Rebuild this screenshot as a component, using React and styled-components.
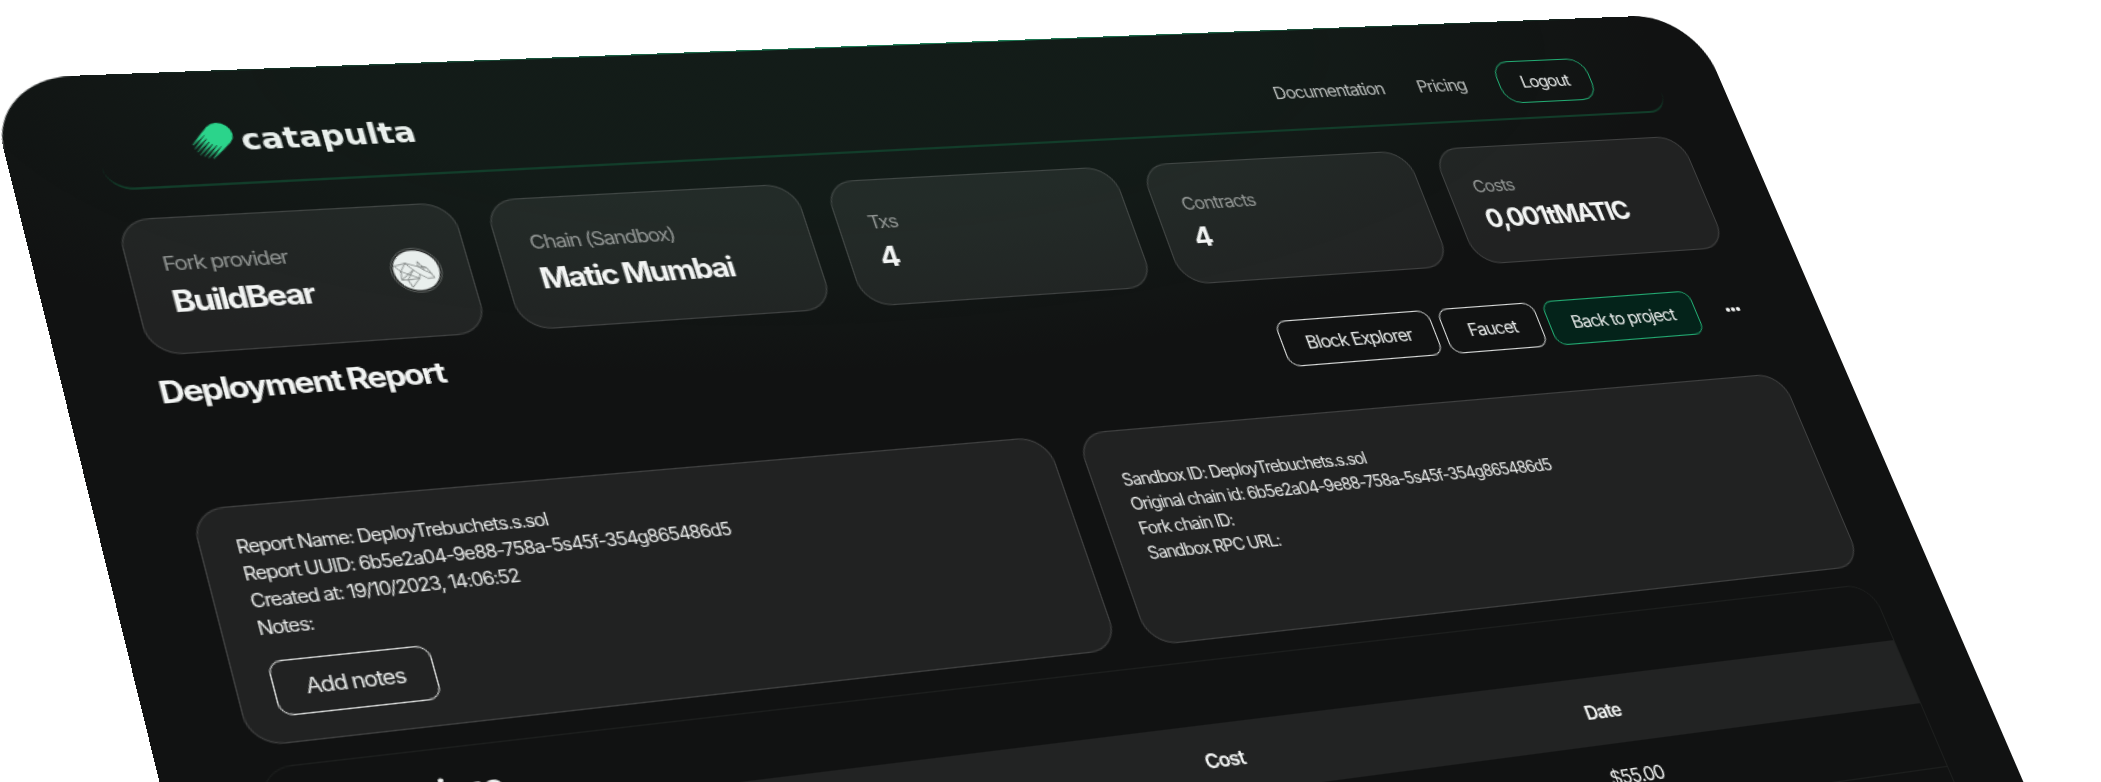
import React from 'react';
import styled, { createGlobalStyle, css } from 'styled-components';

const GlobalStyle = createGlobalStyle`
  *, *::before, *::after { box-sizing: border-box; }
  html, body { margin: 0; background: #fff; }
`;

const Scene = styled.main`
  height: 100vh;
  overflow: hidden;
  background: #fff;
`;

const tracking = css`
  letter-spacing: -0.06em;
`;

/* The whole dashboard lies on one plane that is tilted in space. */
const Board = styled.div`
  ${tracking}
  display: flex;
  flex-direction: column;
  width: 68.54vw;
  min-width: 1180px;
  min-height: 880px;
  padding: 26px 64px 64px;
  border-radius: 60px;
  background:
    linear-gradient(90deg, transparent 60px, #1d7d56 45%, #1d7d56 55%, transparent calc(100% - 60px)) top / 100% 1px no-repeat,
    radial-gradient(760px 290px at 44% 0%, rgba(36, 110, 78, 0.11), rgba(36, 110, 78, 0.1) 50%, transparent),
    #111212;
  color: #f2f4f3;
  font-family: Inter, "Liberation Sans", sans-serif;
  font-size: 16px;
  line-height: 24px;
  transform-origin: 0 0;
  transform: matrix3d(
    1.445675, -0.042961, 0, 0.000154535,
    0.29155, 1.167084, 0, -0.000126103,
    0, 0, 1, 0,
    -13.6, 79.07, 0, 1
  );
`;

const Header = styled.header`
  display: flex;
  align-items: center;
  justify-content: space-between;
  height: 72px;
  padding: 0 64px 0 66px;
  border-bottom: 2px solid #123d2a;
  border-radius: 0 0 20px 20px;
`;

const Brand = styled.a`
  display: flex;
  align-items: center;
  gap: 5px;
  color: #e9efec;
  font: 700 24px/32px "DejaVu Sans", sans-serif;
  letter-spacing: normal;
  text-decoration: none;
`;

const Nav = styled.nav`
  display: flex;
  align-items: center;
  gap: 32px;
`;

const NavLink = styled.a`
  color: #b9bdbb;
  text-decoration: none;
`;

const Button = styled.button`
  height: 42px;
  padding: 0 21px;
  border: 1px solid ${({ $green }) => ($green ? '#22ac73' : '#dcdedd')};
  border-radius: ${({ $round }) => ($round ? 16 : 10)}px;
  background: ${({ $filled }) => ($filled ? '#04231a' : 'transparent')};
  color: #e8ebea;
  font: inherit;
  letter-spacing: inherit;
  white-space: nowrap;
`;

const panel = css`
  border: 1px solid rgba(255, 255, 255, 0.14);
  border-radius: 24px;
  background: rgba(255, 255, 255, 0.07);
`;

const Stats = styled.section`
  display: grid;
  grid-template-columns: repeat(5, 1fr);
  gap: 24px;
  margin-top: 24px;
`;

const StatCard = styled.article`
  ${panel}
  display: flex;
  align-items: center;
  justify-content: space-between;
  height: 112px;
  padding: 0 20px 0 24px;
`;

const StatText = styled.div`
  display: flex;
  flex-direction: column;
  gap: 4px;
`;

const StatLabel = styled.span`
  color: #939795;
`;

const headline = css`
  ${tracking}
  font-size: 24px;
  font-weight: 700;
  line-height: 32px;
`;

const Heading = styled.h2`
  ${headline}
  margin: 0;
`;

const StatValue = styled.strong`
  ${headline}
`;

const TitleBar = styled.section`
  display: flex;
  justify-content: space-between;
  height: 66px;
  margin-top: 14px;
`;

const Actions = styled.div`
  display: flex;
  align-items: flex-end;
  gap: 8px;
`;

const MoreButton = styled.button`
  display: grid;
  place-items: center;
  width: 40px;
  height: 42px;
  margin-left: 8px;
  padding: 0;
  border: 0;
  background: none;
  color: #f2f4f3;
`;

const Details = styled.section`
  display: grid;
  grid-template-columns: 1fr 1fr;
  gap: 24px;
  margin-top: 42px;
`;

const DetailCard = styled.article`
  ${panel}
  display: flex;
  flex-direction: column;
  align-items: flex-start;
  gap: 15px;
  padding: ${({ $top }) => $top}px 24px 19px;
`;

const Lines = styled.ul`
  ${tracking}
  margin: 0;
  padding: 0;
  list-style: none;
  font-size: 14px;
  line-height: 21px;
  color: #e8eae9;
`;

const TableCard = styled.section`
  margin-top: 16px;
  border: 1px solid #1d1f1e;
  border-radius: 24px;
  overflow: hidden;
`;

const TableTitle = styled(Heading)`
  padding: 16px 24px 3px;
`;

const Table = styled.table`
  width: 100%;
  border-collapse: collapse;
  table-layout: fixed;
`;

const HeadCell = styled.th`
  height: 57px;
  padding: 0 24px;
  background: #222323;
  font-weight: 600;
  text-align: left;
`;

const Cell = styled.td`
  height: 56px;
  padding: 0 24px;
  border-bottom: 1px solid #1d1f1e;
`;

function CometLogo() {
  const lengths = [20, 22, 23, 24, 23, 22, 20];
  const k = Math.SQRT1_2;
  /* A point at `across` along the ball's diameter and `along` down the tail. */
  const at = (across, along) =>
    `${(22 + (across - along) * k).toFixed(2)} ${(10 + (across + along) * k).toFixed(2)}`;
  return (
    <svg width="32" height="32" viewBox="0 0 32 32" aria-hidden="true">
      <defs>
        <linearGradient id="tail" gradientUnits="userSpaceOnUse" x1="22" y1="10" x2="5" y2="27">
          <stop offset="0.5" stopColor="#2bd48b" />
          <stop offset="1" stopColor="#2bd48b" stopOpacity="0.35" />
        </linearGradient>
      </defs>
      <circle cx="22" cy="10" r="10" fill="#2bd48b" />
      {lengths.map((length, i) => {
        const p = (i - 3) * 2.85;
        return (
          <path
            key={i}
            d={`M${at(p - 1.45, 0)} L${at(p + 1.45, 0)} L${at(p + 1.3, 8)} L${at(p + 0.4, length)} L${at(p - 0.4, length)} L${at(p - 1.3, 8)} Z`}
            fill="url(#tail)"
          />
        );
      })}
    </svg>
  );
}

function BearLogo() {
  return (
    <svg width="38" height="38" viewBox="-19 -19 38 38" role="img" aria-label="BuildBear">
      <circle r="18.4" fill="#1b1d1c" stroke="#6d7270" strokeWidth="0.8" />
      <circle r="16.8" fill="#e9efed" />
      <g fill="none" stroke="#5f6563" strokeWidth="0.6" strokeLinejoin="round">
        <path d="M-15.5 -4.4 L-7 -6.4 L1.8 -3 L2.3 -7.2 L4.4 -3.4 L7.8 -1.7 L10.2 3.3 L11.8 7 L6.8 7.3 L1.6 3.4 L-2.3 -0.4 L-7 -6.4" />
        <path d="M-15.5 -4.4 L-11.6 0.3 L-7 -6.4 M-11.6 0.3 L-12.4 7.4 L-2.3 -0.4 M-11.6 0.3 L0.7 6.8 L1.6 3.4 M0.7 6.8 L-5.9 14 L-8 7.7 L-2.3 -0.4" />
        <path d="M-12.4 7.4 L-8 7.7 L0.7 6.8 M1.8 -3 L7.8 -1.7 M4.4 -3.4 L5.6 0.4 L10.2 3.3 M1.8 -3 L5.6 0.4" />
      </g>
    </svg>
  );
}

function Dots() {
  return (
    <svg width="16" height="4" viewBox="0 0 16 4" fill="currentColor" aria-hidden="true">
      <circle cx="3" cy="2" r="2" />
      <circle cx="8" cy="2" r="2" />
      <circle cx="13" cy="2" r="2" />
    </svg>
  );
}

const stats = [
  { label: 'Fork provider', value: 'BuildBear', icon: <BearLogo /> },
  { label: 'Chain (Sandbox)', value: 'Matic Mumbai' },
  { label: 'Txs', value: '4' },
  { label: 'Contracts', value: '4' },
  { label: 'Costs', value: '0,001tMATIC' },
];

const reportLines = [
  'Report Name: DeployTrebuchets.s.sol',
  'Report UUID: 6b5e2a04-9e88-758a-5s45f-354g865486d5',
  'Created at: 19/10/2023, 14:06:52',
  'Notes:',
];

const sandboxLines = [
  'Sandbox ID: DeployTrebuchets.s.sol',
  'Original chain id: 6b5e2a04-9e88-758a-5s45f-354g865486d5',
  'Fork chain ID:',
  'Sandbox RPC URL:',
];

export default function App() {
  return (
    <Scene>
      <GlobalStyle />
      <Board>
        <Header>
          <Brand href="#home">
            <CometLogo />
            catapulta
          </Brand>
          <Nav>
            <NavLink href="#documentation">Documentation</NavLink>
            <NavLink href="#pricing">Pricing</NavLink>
            <Button $green $round>Logout</Button>
          </Nav>
        </Header>

        <Stats>
          {stats.map(({ label, value, icon }) => (
            <StatCard key={label}>
              <StatText>
                <StatLabel>{label}</StatLabel>
                <StatValue>{value}</StatValue>
              </StatText>
              {icon}
            </StatCard>
          ))}
        </Stats>

        <TitleBar>
          <Heading as="h1">Deployment Report</Heading>
          <Actions>
            <Button>Block Explorer</Button>
            <Button>Faucet</Button>
            <Button $green $filled>Back to project</Button>
            <MoreButton aria-label="More actions">
              <Dots />
            </MoreButton>
          </Actions>
        </TitleBar>

        <Details>
          <DetailCard $top={20}>
            <Lines>
              {reportLines.map((line) => (
                <li key={line}>{line}</li>
              ))}
            </Lines>
            <Button>Add notes</Button>
          </DetailCard>
          <DetailCard $top={31}>
            <Lines>
              {sandboxLines.map((line) => (
                <li key={line}>{line}</li>
              ))}
            </Lines>
          </DetailCard>
        </Details>

        <TableCard>
          <TableTitle>Transactions</TableTitle>
          <Table>
            <thead>
              <tr>
                <HeadCell />
                <HeadCell />
                <HeadCell>Cost</HeadCell>
                <HeadCell>Date</HeadCell>
              </tr>
            </thead>
            <tbody>
              <tr>
                <Cell />
                <Cell />
                <Cell />
                <Cell>$55.00</Cell>
              </tr>
              <tr>
                <Cell />
                <Cell />
                <Cell />
                <Cell />
              </tr>
            </tbody>
          </Table>
        </TableCard>
      </Board>
    </Scene>
  );
}
